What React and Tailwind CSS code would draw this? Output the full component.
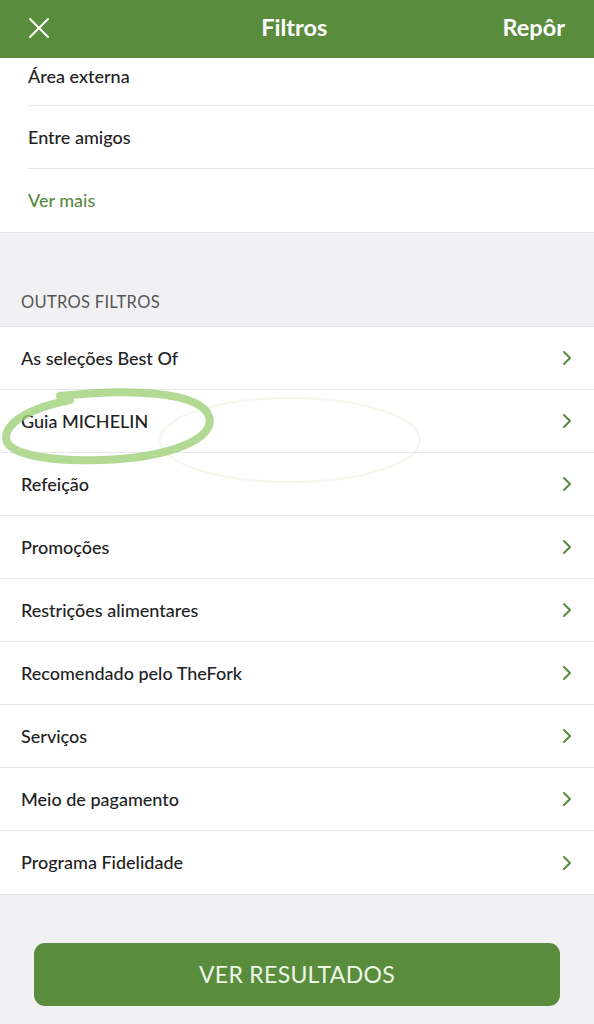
import React from 'react';

const filters = [
  'As seleções Best Of',
  'Guia MICHELIN',
  'Refeição',
  'Promoções',
  'Restrições alimentares',
  'Recomendado pelo TheFork',
  'Serviços',
  'Meio de pagamento',
  'Programa Fidelidade',
];

function Chevron() {
  return (
    <svg width="10" height="16" viewBox="0 0 10 16" fill="none">
      <path d="M2 2l6 6-6 6" stroke="#5a8a3f" strokeWidth="2" strokeLinecap="round" strokeLinejoin="round" />
    </svg>
  );
}

export default function App() {
  return (
    <div className="relative w-[594px] h-[1024px] overflow-hidden bg-[#f1f1f3] text-[#222]" style={{ fontFamily: 'Lato, "Open Sans", sans-serif' }}>
      {/* header */}
      <div className="h-[58px] bg-[#5a8c3e] flex items-center justify-between pl-[28px] pr-[29px] pb-[3px] text-white">
        <svg width="22" height="22" viewBox="0 0 22 22" fill="none">
          <path d="M2 2l18 18M20 2L2 20" stroke="white" strokeWidth="2" strokeLinecap="round" />
        </svg>
        <span className="text-[23.5px] font-bold ml-[36px]">Filtros</span>
        <span className="text-[23.5px] font-bold">Repôr</span>
      </div>

      {/* top section */}
      <div className="bg-white border-b border-[#e2e2e4]">
        <div className="ml-[28px] h-[48px] flex items-start pt-[5px] border-b border-[#e8e8ea] text-[18px] font-medium">Área externa</div>
        <div className="ml-[28px] h-[63px] flex items-center border-b border-[#e8e8ea] text-[18px] font-medium">Entre amigos</div>
        <div className="ml-[28px] h-[63px] flex items-center text-[18px] font-medium text-[#5a8a3f]">Ver mais</div>
      </div>

      <div className="h-[93px] flex items-end pb-[11px] pl-[21px] text-[16.5px] text-[#555] tracking-[0.3px]">OUTROS FILTROS</div>

      {/* filters list */}
      <div className="relative bg-white border-t border-b border-[#e2e2e4]">
        {filters.map((f, i) => (
          <div key={f} className={`h-[63px] flex items-center justify-between pl-[21px] pr-[22px] ${i < filters.length - 1 ? 'border-b border-[#e8e8ea]' : ''}`}>
            <span className="text-[18px] font-medium">{f}</span>
            <Chevron />
          </div>
        ))}

        {/* hand-drawn highlight */}
        <svg className="absolute left-0 top-[55px] pointer-events-none" width="440" height="130" viewBox="0 0 440 130" fill="none">
          <ellipse cx="290" cy="58" rx="130" ry="42" stroke="#eaf3df" strokeOpacity="0.6" strokeWidth="2" />
          <path d="M60 14 C130 6 196 10 208 32 C220 56 170 76 100 78 C40 80 6 70 6 56 C6 40 30 26 70 18" stroke="#9fd17a" strokeOpacity="0.8" strokeWidth="8" strokeLinecap="round" />
        </svg>
      </div>

      {/* button */}
      <div className="px-[34px] pt-[48px]">
        <button className="w-full h-[63px] rounded-[11px] bg-[#5a8c3e] text-[#eef6e6] text-[23px] tracking-[0.3px]">VER RESULTADOS</button>
      </div>
    </div>
  );
}
